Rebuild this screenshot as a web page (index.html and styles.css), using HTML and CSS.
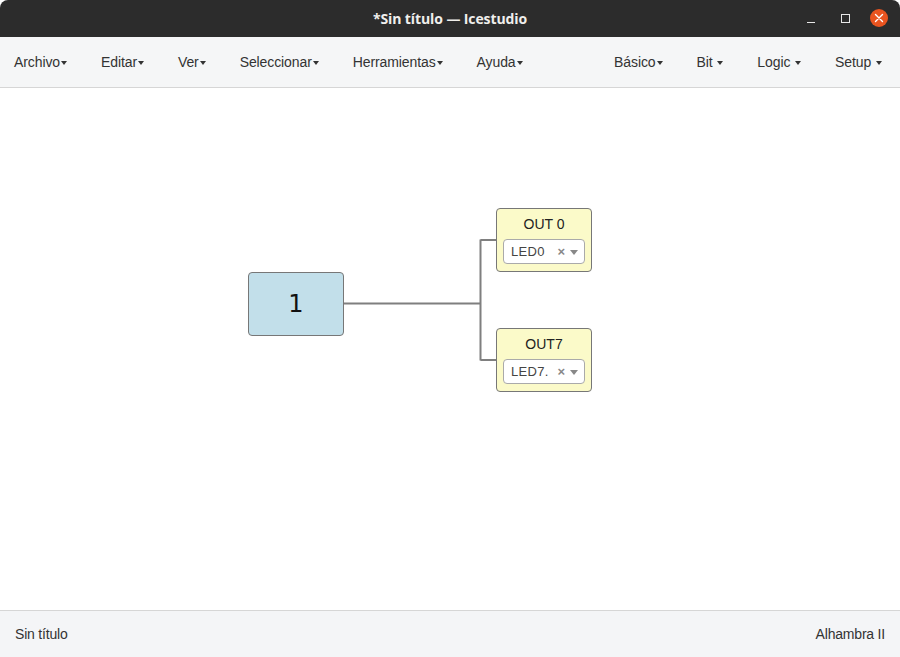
FILE: index.html
```html
<!DOCTYPE html>
<html lang="es">
<head>
<meta charset="utf-8">
<title>*Sin título — Icestudio</title>
<link rel="stylesheet" href="styles.css">
</head>
<body>
<div class="window">
  <header class="titlebar">
    <div class="title">*Sin título — Icestudio</div>
    <div class="controls">
      <span class="ctl ctl-min"></span>
      <span class="ctl ctl-max"></span>
      <span class="ctl ctl-close">
        <svg width="10" height="10" viewBox="0 0 10 10"><path d="M1.5 1.5 L8.5 8.5 M8.5 1.5 L1.5 8.5" stroke="#fff" stroke-width="1.4" stroke-linecap="round"/></svg>
      </span>
    </div>
  </header>
  <nav class="menubar">
    <ul class="menu">
      <li class="item">Archivo<span class="caret"></span></li>
      <li class="item">Editar<span class="caret"></span></li>
      <li class="item">Ver<span class="caret"></span></li>
      <li class="item">Seleccionar<span class="caret"></span></li>
      <li class="item">Herramientas<span class="caret"></span></li>
      <li class="item">Ayuda<span class="caret"></span></li>
    </ul>
    <ul class="menu menu-right">
      <li class="item">Básico<span class="caret"></span></li>
      <li class="item">Bit&nbsp;<span class="caret"></span></li>
      <li class="item">Logic&nbsp;<span class="caret"></span></li>
      <li class="item">Setup&nbsp;<span class="caret"></span></li>
    </ul>
  </nav>
  <main class="canvas">
    <svg class="wires" width="900" height="522" viewBox="0 88 900 522">
      <path d="M343 303.5 H480.5 M480.5 239.5 V360.5 M480.5 240 H497 M480.5 360 H497" stroke="#7f7f7f" stroke-width="2" fill="none"/>
    </svg>
    <div class="node const-node"><span class="const-value">1</span></div>
    <div class="node out-node out0">
      <div class="out-label">OUT 0</div>
      <div class="select"><span class="sel-text">LED0</span><span class="sel-x">×</span><span class="sel-arrow"></span></div>
    </div>
    <div class="node out-node out7">
      <div class="out-label">OUT7</div>
      <div class="select"><span class="sel-text">LED7.</span><span class="sel-x">×</span><span class="sel-arrow"></span></div>
    </div>
  </main>
  <footer class="statusbar">
    <span>Sin título</span>
    <span>Alhambra II</span>
  </footer>
</div>
</body>
</html>
```

FILE: styles.css
```css
* { box-sizing: border-box; }
html, body { margin: 0; padding: 0; background: #ffffff; }
body { font-family: "Liberation Sans", Arial, sans-serif; color: #333; }
.window { width: 900px; height: 657px; display: flex; flex-direction: column; overflow: hidden; }

.titlebar {
  height: 37px; flex: none; background: #2c2c2c; border-radius: 8px 8px 0 0;
  display: flex; align-items: center; justify-content: center; position: relative;
}
.title { color: #f0efec; font-family: "Open Sans", "Noto Sans", sans-serif; font-weight: 700; font-size: 14px; letter-spacing: -0.1px; }
.controls { position: absolute; right: 12px; top: 9px; display: flex; align-items: center; gap: 0; }
.ctl { display: inline-flex; width: 34px; height: 18px; align-items: center; justify-content: center; }
.ctl-min::before { content: ""; display: block; width: 8px; height: 1px; background: #e8e8e8; margin-top: 8px; }
.ctl-max::before { content: ""; display: block; width: 7px; height: 7px; border: 1px solid #e8e8e8; }
.ctl-close { width: 18px; height: 18px; border-radius: 50%; background: #e95420; margin-left: 8px; }
.ctl-close svg { display: block; }

.menubar {
  height: 51px; flex: none; background: #f5f6f7; border-bottom: 1px solid #d6d6d6;
  display: flex; justify-content: space-between; align-items: center; padding: 0 18px 0 14px;
}
.menu { list-style: none; margin: 0; padding: 0; display: flex; gap: 34px; }
.menu .item { font-size: 14px; color: #333; display: flex; align-items: center; white-space: nowrap; letter-spacing: -0.1px; }
.caret { display: inline-block; width: 0; height: 0; border-left: 3.5px solid transparent; border-right: 3.5px solid transparent; border-top: 4px solid #333; margin-left: 1px; margin-top: 2px; }

.canvas { flex: 1; position: relative; background: #fff; }
.wires { position: absolute; left: 0; top: 0; }
.node { position: absolute; width: 96px; height: 64px; border: 1px solid #777; border-radius: 4px; }
.const-node { left: 248px; top: 184px; background: #c2dfea; display: flex; align-items: center; justify-content: center; }
.const-value { font-family: "DejaVu Sans", sans-serif; font-size: 24px; color: #111; }
.out-node { left: 496px; background: #fbfac9; display: flex; flex-direction: column; align-items: center; }
.out0 { top: 120px; }
.out7 { top: 240px; }
.out-label { font-size: 14px; color: #222; margin-top: 6px; height: 18px; line-height: 18px; }
.select {
  margin-top: 6px; width: 82px; height: 25px; background: #fff; border: 1px solid #aaa; border-radius: 4px;
  display: flex; align-items: center; padding: 0 6px 0 7px; font-size: 13px; color: #444;
}
.sel-text { flex: 1; letter-spacing: 0.3px; }
.sel-x { font-size: 13px; font-weight: 700; color: #888; margin-right: 5px; }
.sel-arrow { width: 0; height: 0; border-left: 4px solid transparent; border-right: 4px solid transparent; border-top: 5px solid #888; margin-top: 2px; }

.statusbar {
  height: 47px; flex: none; background: #f4f5f7; border-top: 1px solid #d6d6d6;
  display: flex; justify-content: space-between; align-items: center; padding: 0 15px; font-size: 14px; color: #333; letter-spacing: -0.2px;
}
```
